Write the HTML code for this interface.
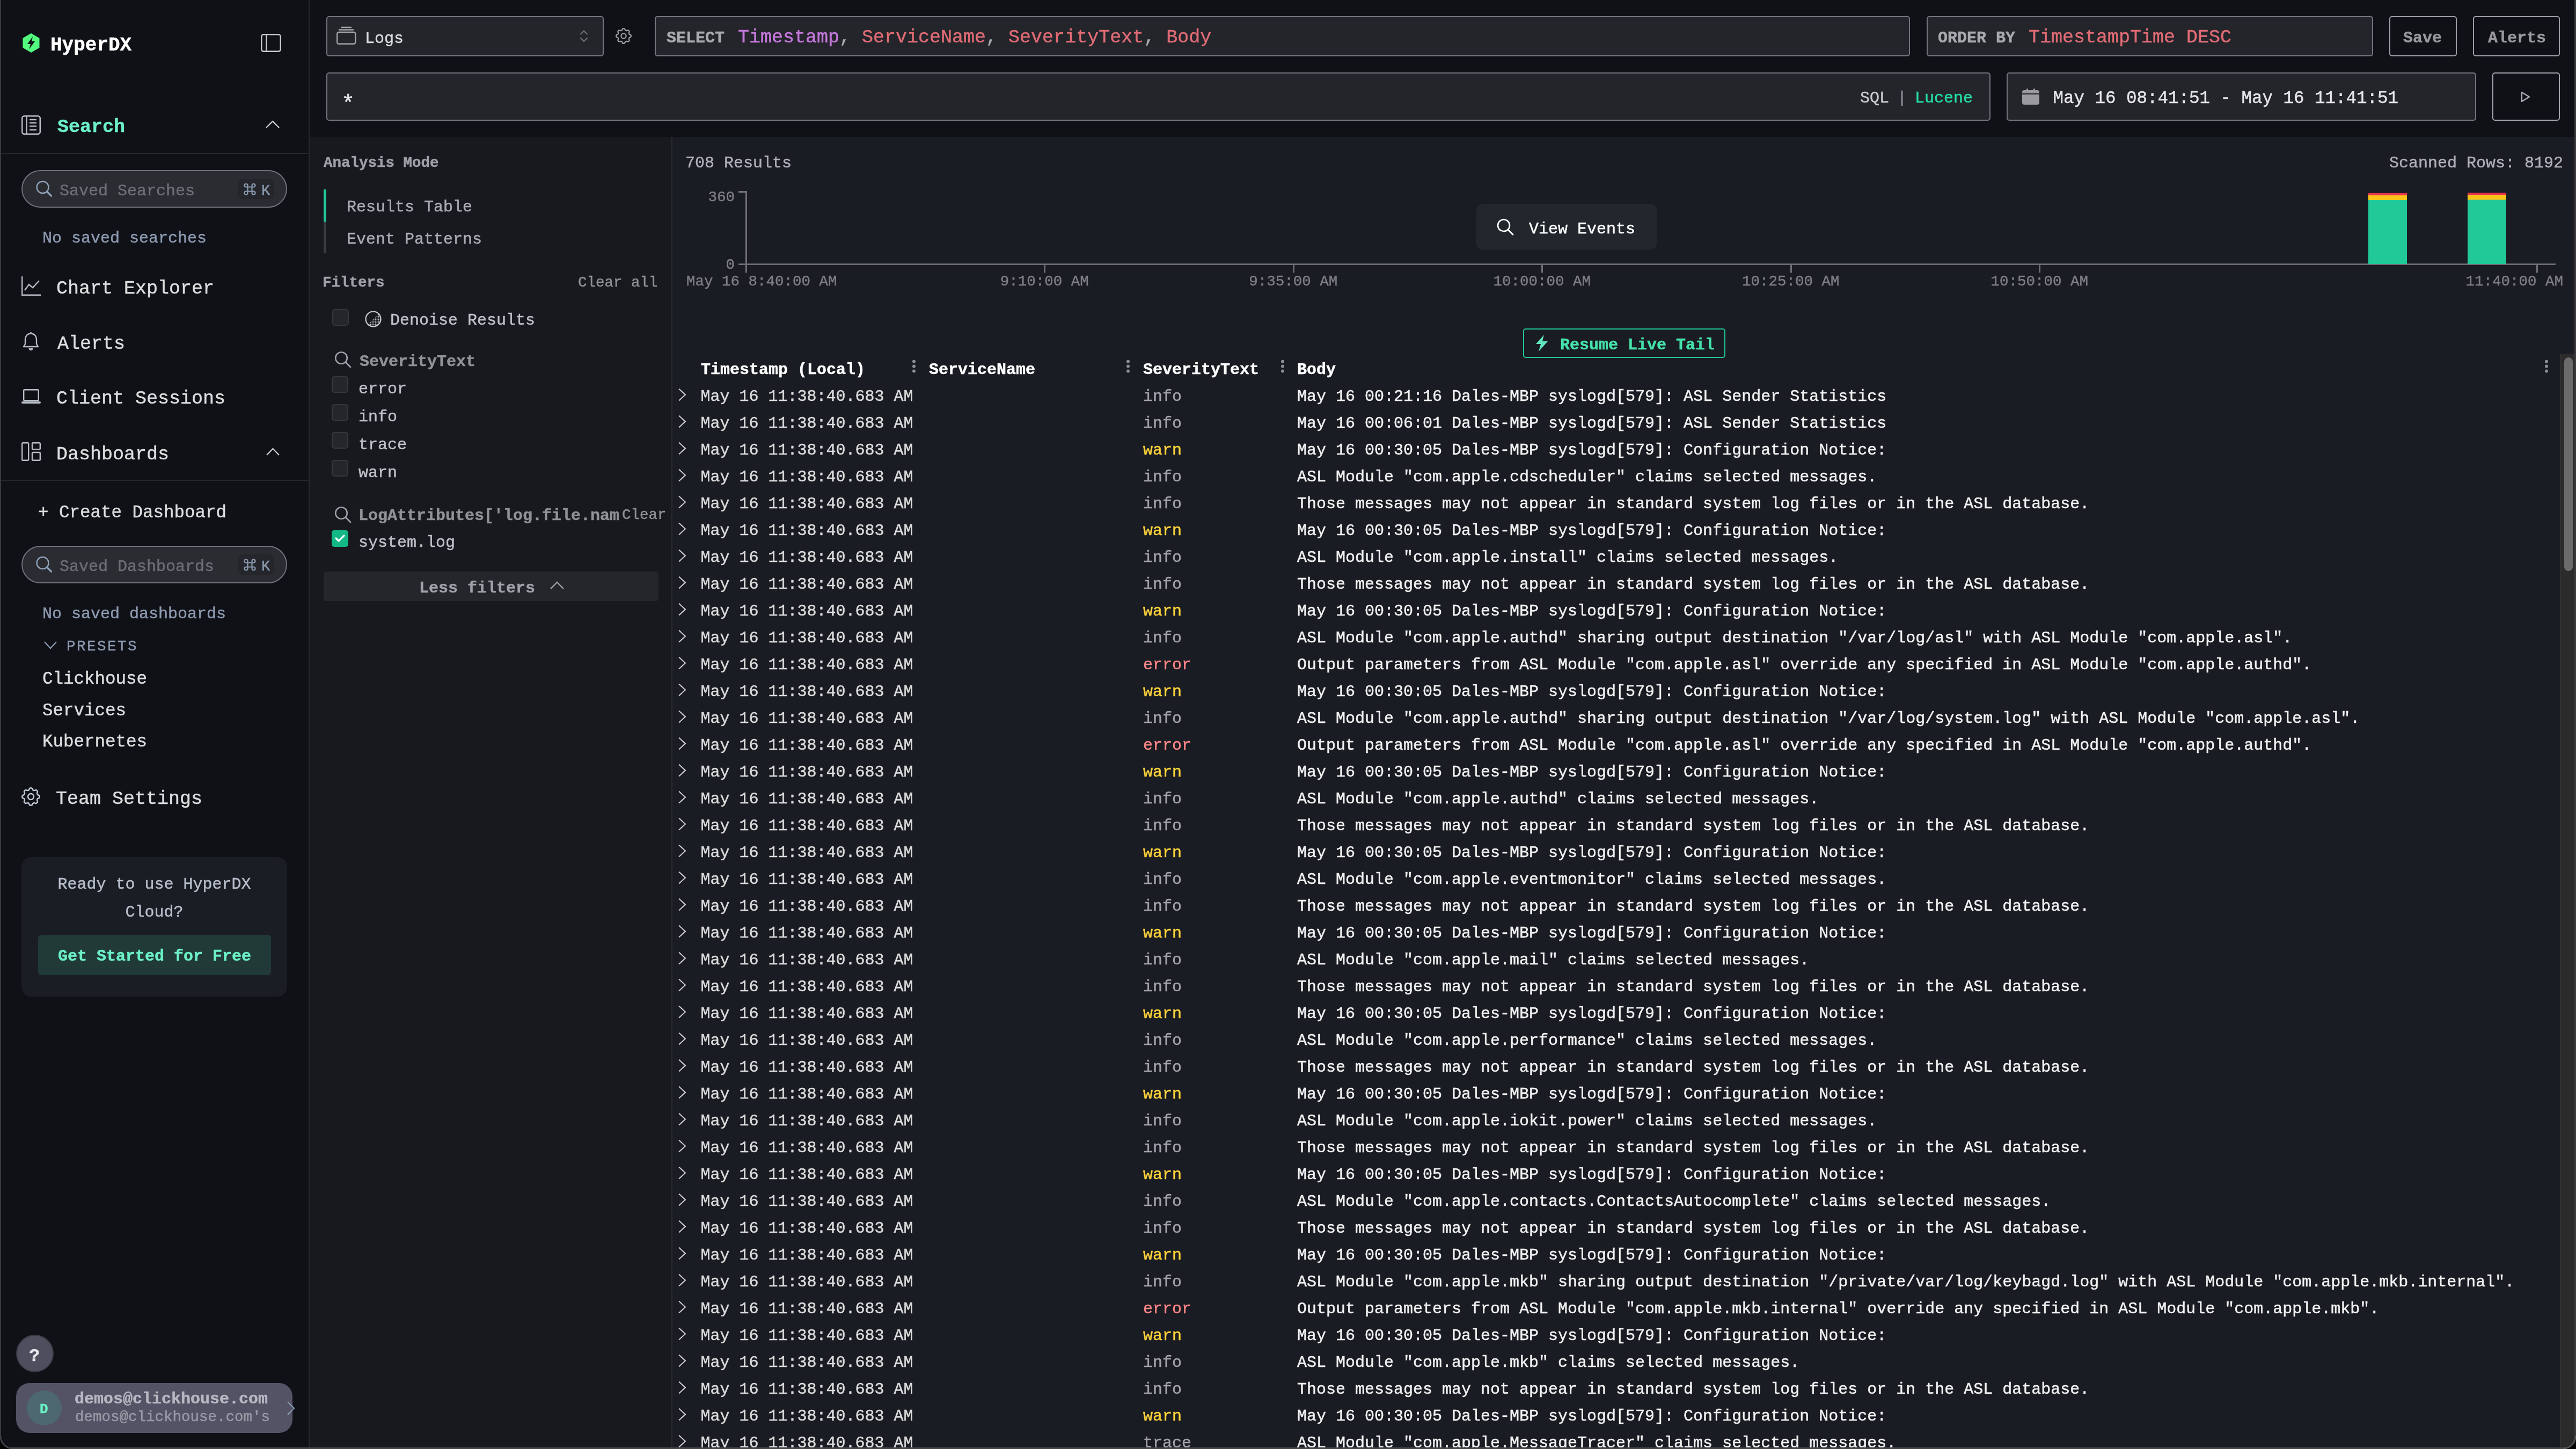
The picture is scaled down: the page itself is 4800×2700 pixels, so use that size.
<!DOCTYPE html><html><head><meta charset="utf-8"><style>
html,body{margin:0;padding:0;width:4800px;height:2700px;overflow:hidden;background:#0f1117;}
body{position:relative;font-family:"Liberation Mono",monospace;}
.t{position:absolute;white-space:pre;line-height:1.2;-webkit-text-stroke:0.45px currentColor;}
.r{position:absolute;box-sizing:border-box;}
svg.r{overflow:visible}
</style></head><body><div id="root" style="position:absolute;left:0;top:0;width:4800px;height:2700px;overflow:hidden;will-change:transform;background:#0f1117">
<div class="r" style="left:577px;top:255px;width:674px;height:2445px;background:#18191e"></div>
<div class="r" style="left:1251px;top:255px;width:2px;height:2445px;background:#2a2b30"></div>
<div class="r" style="left:1253px;top:255px;width:3544px;height:2445px;background:#1a1c23"></div>
<div class="r" style="left:575px;top:0px;width:2px;height:2700px;background:#25272c"></div>
<div class="r" style="left:0px;top:0px;width:2px;height:2700px;background:#3b3b3d"></div>
<div class="r" style="left:4797px;top:0px;width:3px;height:2700px;background:#3b3b3d"></div>
<svg class="r" style="left:42px;top:62px;" width="32" height="36" viewBox="0 0 32 36"><polygon points="16,0 31.5,9 31.5,27 16,36 0.5,27 0.5,9" fill="#52fa7e"/><path d="M19 6 L9 20 H15 L12 30 L23 15 H17 Z" fill="#0f1117"/></svg>
<div class="t " style="left:94.0px;top:62.8px;font-size:36px;color:#ffffff;font-weight:700;">HyperDX</div>
<svg class="r" style="left:486px;top:63px;" width="38" height="34" viewBox="0 0 38 34"><rect x="1.25" y="1.25" width="35.5" height="31.5" rx="4" fill="none" stroke="#c8c8cc" stroke-width="2.5"/><line x1="10.5" y1="1.5" x2="10.5" y2="32.5" stroke="#c8c8cc" stroke-width="2.5"/></svg>
<svg class="r" style="left:40px;top:215px;" width="36" height="36" viewBox="0 0 36 36"><rect x="1.25" y="1.25" width="33.5" height="33.5" rx="4" fill="none" stroke="#b8bcc4" stroke-width="2.5"/><line x1="9.5" y1="2" x2="9.5" y2="34" stroke="#b8bcc4" stroke-width="2.5"/><g stroke="#b8bcc4" stroke-width="2.5"><line x1="15" y1="8" x2="28" y2="8"/><line x1="15" y1="14" x2="28" y2="14"/><line x1="15" y1="20" x2="28" y2="20"/><line x1="15" y1="27" x2="28" y2="27"/></g></svg>
<div class="t " style="left:107.0px;top:215.7px;font-size:35px;color:#6cf0c6;font-weight:700;">Search</div>
<svg class="r" style="left:495px;top:224px;" width="26" height="16" viewBox="0 0 26 16"><polyline points="1,14 13,2 25,14" fill="none" stroke="#d8d8dc" stroke-width="2.2"/></svg>
<div class="r" style="left:2px;top:285px;width:573px;height:2px;background:#25272c"></div>
<div class="r" style="left:40px;top:317px;width:495px;height:70px;background:#2b2b32;border:2px solid #72717c;border-radius:35px"></div>
<svg class="r" style="left:67px;top:337px;" width="31" height="31" viewBox="0 0 31 31"><circle cx="12.5" cy="12" r="11" fill="none" stroke="#8ea2b8" stroke-width="2.4"/><line x1="20.5" y1="20" x2="28.5" y2="28" stroke="#8ea2b8" stroke-width="3.2" stroke-linecap="round"/></svg>
<div class="t " style="left:111.0px;top:338.0px;font-size:30px;color:#6d6f77;font-weight:400;">Saved Searches</div>
<div class="r" style="left:444px;top:333px;width:67px;height:38px;background:#25262c;border-radius:8px"></div>
<svg class="r" style="left:454px;top:341px;" width="23" height="23" viewBox="0 0 23 23"><path d="M7.5 7.5 V4.5 A3 3 0 1 0 4.5 7.5 H18.5 A3 3 0 1 0 15.5 4.5 V18.5 A3 3 0 1 0 18.5 15.5 H4.5 A3 3 0 1 0 7.5 18.5 Z" fill="none" stroke="#8c9bb0" stroke-width="2.2"/></svg>
<div class="t " style="left:487.0px;top:339.6px;font-size:27px;color:#8c9bb0;font-weight:400;">K</div>
<div class="t " style="left:79.0px;top:426.0px;font-size:30px;color:#8d9ab0;font-weight:400;">No saved searches</div>
<svg class="r" style="left:40px;top:515px;" width="36" height="36" viewBox="0 0 36 36"><polyline points="1.2,0 1.2,34.8 36,34.8" fill="none" stroke="#b8bcc4" stroke-width="2.4"/><polyline points="6,26 14,15 21,21 33,8" fill="none" stroke="#b8bcc4" stroke-width="2.4"/></svg>
<div class="t " style="left:105.0px;top:516.7px;font-size:35px;color:#dedede;font-weight:400;">Chart Explorer</div>
<svg class="r" style="left:42px;top:619px;" width="31" height="35" viewBox="0 0 31 35"><path d="M15.5 2.5 C9 2.5 5 7.5 5 14 V22 L2 27 H29 L26 22 V14 C26 7.5 22 2.5 15.5 2.5 Z" fill="none" stroke="#b8bcc4" stroke-width="2.4" stroke-linejoin="round"/><line x1="15.5" y1="0" x2="15.5" y2="3" stroke="#b8bcc4" stroke-width="2.4"/><path d="M11.5 30 A4 4 0 0 0 19.5 30 Z" fill="#b8bcc4"/></svg>
<div class="t " style="left:107.0px;top:619.7px;font-size:35px;color:#dedede;font-weight:400;">Alerts</div>
<svg class="r" style="left:40px;top:725px;" width="36" height="27" viewBox="0 0 36 27"><rect x="4.2" y="1.2" width="27.6" height="20" rx="1.5" fill="none" stroke="#b8bcc4" stroke-width="2.4"/><rect x="0" y="23" width="36" height="4" rx="2" fill="#b8bcc4"/></svg>
<div class="t " style="left:105.0px;top:721.7px;font-size:35px;color:#dedede;font-weight:400;">Client Sessions</div>
<svg class="r" style="left:40px;top:824px;" width="36" height="35" viewBox="0 0 36 35"><rect x="1.2" y="1.2" width="12" height="32.6" rx="1.5" fill="none" stroke="#b8bcc4" stroke-width="2.4"/><rect x="20" y="1.2" width="14.8" height="12" rx="1.5" fill="none" stroke="#b8bcc4" stroke-width="2.4"/><rect x="20" y="19" width="14.8" height="14.8" rx="1.5" fill="none" stroke="#b8bcc4" stroke-width="2.4"/></svg>
<div class="t " style="left:105.0px;top:825.7px;font-size:35px;color:#dedede;font-weight:400;">Dashboards</div>
<svg class="r" style="left:496px;top:834px;" width="25" height="16" viewBox="0 0 25 16"><polyline points="1,14 12.5,2 24,14" fill="none" stroke="#d8d8dc" stroke-width="2.2"/></svg>
<div class="r" style="left:2px;top:894px;width:573px;height:2px;background:#25272c"></div>
<div class="t " style="left:71.0px;top:935.9px;font-size:32.5px;color:#dedede;font-weight:400;">+ Create Dashboard</div>
<div class="r" style="left:40px;top:1017px;width:495px;height:70px;background:#2b2b32;border:2px solid #72717c;border-radius:35px"></div>
<svg class="r" style="left:67px;top:1037px;" width="31" height="31" viewBox="0 0 31 31"><circle cx="12.5" cy="12" r="11" fill="none" stroke="#8ea2b8" stroke-width="2.4"/><line x1="20.5" y1="20" x2="28.5" y2="28" stroke="#8ea2b8" stroke-width="3.2" stroke-linecap="round"/></svg>
<div class="t " style="left:111.0px;top:1038.0px;font-size:30px;color:#6d6f77;font-weight:400;">Saved Dashboards</div>
<div class="r" style="left:444px;top:1033px;width:67px;height:38px;background:#25262c;border-radius:8px"></div>
<svg class="r" style="left:454px;top:1041px;" width="23" height="23" viewBox="0 0 23 23"><path d="M7.5 7.5 V4.5 A3 3 0 1 0 4.5 7.5 H18.5 A3 3 0 1 0 15.5 4.5 V18.5 A3 3 0 1 0 18.5 15.5 H4.5 A3 3 0 1 0 7.5 18.5 Z" fill="none" stroke="#8c9bb0" stroke-width="2.2"/></svg>
<div class="t " style="left:487.0px;top:1039.6px;font-size:27px;color:#8c9bb0;font-weight:400;">K</div>
<div class="t " style="left:79.0px;top:1126.0px;font-size:30px;color:#8d9ab0;font-weight:400;">No saved dashboards</div>
<svg class="r" style="left:82px;top:1194px;" width="24" height="17" viewBox="0 0 24 17"><polyline points="1,2 12,14 23,2" fill="none" stroke="#8d9ab0" stroke-width="2.2"/></svg>
<div class="t " style="left:124.0px;top:1187.7px;font-size:27.5px;color:#8d9ab0;font-weight:400;letter-spacing:2.5px">PRESETS</div>
<div class="t " style="left:79.0px;top:1246.4px;font-size:32.5px;color:#dedede;font-weight:400;">Clickhouse</div>
<div class="t " style="left:79.0px;top:1304.9px;font-size:32.5px;color:#dedede;font-weight:400;">Services</div>
<div class="t " style="left:79.0px;top:1362.9px;font-size:32.5px;color:#dedede;font-weight:400;">Kubernetes</div>
<svg class="r" style="left:40px;top:1467px;" width="35" height="35" viewBox="2.31 2.31 19.38 19.38"><g fill="none" stroke="#c1c9d6" stroke-width="1.38"><path d="M10.325 4.317c.426 -1.756 2.924 -1.756 3.35 0a1.724 1.724 0 0 0 2.573 1.066c1.543 -.94 3.31 .826 2.37 2.37a1.724 1.724 0 0 0 1.065 2.572c1.756 .426 1.756 2.924 0 3.35a1.724 1.724 0 0 0 -1.066 2.573c.94 1.543 -.826 3.31 -2.37 2.37a1.724 1.724 0 0 0 -2.572 1.065c-.426 1.756 -2.924 1.756 -3.35 0a1.724 1.724 0 0 0 -2.573 -1.066c-1.543 .94 -3.31 -.826 -2.37 -2.37a1.724 1.724 0 0 0 -1.065 -2.572c-1.756 -.426 -1.756 -2.924 0 -3.35a1.724 1.724 0 0 0 1.066 -2.573c-.94 -1.543 .826 -3.31 2.37 -2.37c1 .608 2.296 .07 2.572 -1.065z"/><circle cx="12" cy="12" r="3"/></g></svg>
<div class="t " style="left:104.0px;top:1467.7px;font-size:35px;color:#dedede;font-weight:400;">Team Settings</div>
<div class="r" style="left:40px;top:1597px;width:495px;height:260px;background:#1b1d24;border-radius:18px"></div>
<div class="t" style="left:40px;width:495px;text-align:center;top:1622.0px;font-size:30px;color:#b8bfcc;line-height:52px">Ready to use HyperDX<br>Cloud?</div>
<div class="r" style="left:71px;top:1742px;width:434px;height:75px;background:#213a37;border-radius:6px"></div>
<div class="t" style="left:71px;width:434px;text-align:center;top:1764.0px;font-size:30px;color:#6cf0c6;font-weight:700;line-height:1.2">Get Started for Free</div>
<div class="r" style="left:30px;top:2487px;width:70px;height:70px;background:#4f4e5f;border:2px solid #3a3a45;border-radius:50%"></div>
<div class="t " style="left:54.0px;top:2506.6px;font-size:34px;color:#e6e6ea;font-weight:700;">?</div>
<div class="r" style="left:30px;top:2577px;width:515px;height:93px;background:#545366;border-radius:25px"></div>
<div class="r" style="left:50px;top:2591px;width:65px;height:65px;background:#4d6870;border-radius:50%"></div>
<div class="t " style="left:74.0px;top:2610.5px;font-size:26px;color:#6cf0c6;font-weight:700;">D</div>
<div class="t " style="left:139.0px;top:2589.0px;font-size:30px;color:#b8b8c3;font-weight:700;">demos@clickhouse.com</div>
<div class="t " style="left:140.0px;top:2624.2px;font-size:27.5px;color:#9a9aa6;font-weight:400;">demos@clickhouse.com's</div>
<svg class="r" style="left:535px;top:2611px;" width="15" height="26" viewBox="0 0 15 26"><polyline points="1,1 13,13 1,25" fill="none" stroke="#8da0b8" stroke-width="2"/></svg>
<div class="r" style="left:608px;top:30px;width:517px;height:75px;background:#24252b;border:2px solid #75747f;border-radius:5px"></div>
<svg class="r" style="left:627px;top:50px;" width="37" height="33" viewBox="0 0 37 33"><g fill="none" stroke="#a5a5aa" stroke-width="2.4"><rect x="1.2" y="10" width="34" height="21.8" rx="3"/></g><line x1="5" y1="5.5" x2="31" y2="5.5" stroke="#a5a5aa" stroke-width="2.4" stroke-linecap="round"/><line x1="9" y1="1" x2="27" y2="1" stroke="#a5a5aa" stroke-width="2.4" stroke-linecap="round"/></svg>
<div class="t " style="left:680.0px;top:54.0px;font-size:30px;color:#d9d9de;font-weight:400;">Logs</div>
<svg class="r" style="left:1081px;top:56px;" width="14" height="23" viewBox="0 0 14 23"><polyline points="1,7.5 7,1.5 13,7.5" fill="none" stroke="#6d6e75" stroke-width="2.2" stroke-linecap="round" stroke-linejoin="round"/><polyline points="1,15 7,21 13,15" fill="none" stroke="#6d6e75" stroke-width="2.2" stroke-linecap="round" stroke-linejoin="round"/></svg>
<svg class="r" style="left:1147px;top:52px;" width="30" height="30" viewBox="2.3 2.3 19.4 19.4"><g fill="none" stroke="#9c9ea3" stroke-width="1.42"><path d="M10.325 4.317c.426 -1.756 2.924 -1.756 3.35 0a1.724 1.724 0 0 0 2.573 1.066c1.543 -.94 3.31 .826 2.37 2.37a1.724 1.724 0 0 0 1.065 2.572c1.756 .426 1.756 2.924 0 3.35a1.724 1.724 0 0 0 -1.066 2.573c.94 1.543 -.826 3.31 -2.37 2.37a1.724 1.724 0 0 0 -2.572 1.065c-.426 1.756 -2.924 1.756 -3.35 0a1.724 1.724 0 0 0 -2.573 -1.066c-1.543 .94 -3.31 -.826 -2.37 -2.37a1.724 1.724 0 0 0 -1.065 -2.572c-1.756 -.426 -1.756 -2.924 0 -3.35a1.724 1.724 0 0 0 1.066 -2.573c-.94 -1.543 .826 -3.31 2.37 -2.37c1 .608 2.296 .07 2.572 -1.065z"/><circle cx="12" cy="12" r="3"/></g></svg>
<div class="r" style="left:1220px;top:30px;width:2339px;height:75px;background:#24252b;border:2px solid #75747f;border-radius:5px"></div>
<div class="t " style="left:1242.0px;top:53.0px;font-size:30px;color:#a9a9b0;font-weight:700;">SELECT</div>
<div class="t" style="left:1375px;top:48.7px;font-size:35px;line-height:1.2;color:#a9a9b0"><span style="color:#c678dd">Timestamp</span>, <span style="color:#e06c75">ServiceName</span>, <span style="color:#e06c75">SeverityText</span>, <span style="color:#e06c75">Body</span></div>
<div class="r" style="left:3590px;top:30px;width:832px;height:75px;background:#24252b;border:2px solid #75747f;border-radius:5px"></div>
<div class="t " style="left:3611.0px;top:53.0px;font-size:30px;color:#a9a9b0;font-weight:700;">ORDER BY</div>
<div class="t " style="left:3780.0px;top:48.7px;font-size:35px;color:#e06c75;font-weight:400;">TimestampTime DESC</div>
<div class="r" style="left:4452px;top:30px;width:126px;height:75px;background:#0f1117;border:2px solid #9e9ea6;border-radius:5px"></div>
<div class="t " style="left:4478.0px;top:53.0px;font-size:30px;color:#98989e;font-weight:700;">Save</div>
<div class="r" style="left:4608px;top:30px;width:162px;height:75px;background:#0f1117;border:2px solid #9e9ea6;border-radius:5px"></div>
<div class="t " style="left:4636.0px;top:53.0px;font-size:30px;color:#98989e;font-weight:700;">Alerts</div>
<div class="r" style="left:608px;top:135px;width:3101px;height:90px;background:#24252b;border:2px solid #75747f;border-radius:5px"></div>
<div class="t " style="left:636.0px;top:169.6px;font-size:42px;color:#e6e6ea;font-weight:400;">*</div>
<div class="t " style="left:3466.0px;top:165.0px;font-size:30px;color:#c9c9cf;font-weight:400;">SQL</div>
<div class="t " style="left:3535.0px;top:165.0px;font-size:30px;color:#8a8a92;font-weight:400;">|</div>
<div class="t " style="left:3568.0px;top:165.0px;font-size:30px;color:#25dea2;font-weight:400;">Lucene</div>
<div class="r" style="left:3739px;top:135px;width:875px;height:90px;background:#24252b;border:2px solid #75747f;border-radius:5px"></div>
<svg class="r" style="left:3768px;top:165px;" width="32" height="30" viewBox="0 0 32 30"><rect x="0" y="3" width="32" height="27" rx="4" fill="#9a9aa0"/><rect x="0" y="9" width="32" height="2" fill="#24252b"/><rect x="8" y="0" width="3" height="6" rx="1" fill="#9a9aa0"/><rect x="21" y="0" width="3" height="6" rx="1" fill="#9a9aa0"/></svg>
<div class="t " style="left:3825.5px;top:163.9px;font-size:32.5px;color:#e6e6ea;font-weight:400;">May 16 08:41:51 - May 16 11:41:51</div>
<div class="r" style="left:4644px;top:135px;width:126px;height:90px;background:#0f1117;border:2px solid #a6a5b1;border-radius:5px"></div>
<svg class="r" style="left:4697px;top:170px;" width="18" height="21" viewBox="0 0 18 21"><polygon points="2,2 16,10.5 2,19" fill="none" stroke="#b0b0b8" stroke-width="2.2" stroke-linejoin="round"/></svg>
<div class="t " style="left:603.0px;top:287.2px;font-size:27.5px;color:#a0a0a8;font-weight:700;">Analysis Mode</div>
<div class="r" style="left:603px;top:353px;width:5px;height:60px;background:#20c997"></div>
<div class="r" style="left:603px;top:413px;width:5px;height:59px;background:#3a3b40"></div>
<div class="t " style="left:646.0px;top:368.0px;font-size:30px;color:#abaab5;font-weight:400;">Results Table</div>
<div class="t " style="left:646.0px;top:428.0px;font-size:30px;color:#abaab5;font-weight:400;">Event Patterns</div>
<div class="t " style="left:601.0px;top:510.2px;font-size:27.5px;color:#a0a0a8;font-weight:700;">Filters</div>
<div class="t " style="left:1077.0px;top:510.2px;font-size:27.5px;color:#909096;font-weight:400;">Clear all</div>
<div class="r" style="left:619px;top:576px;width:31px;height:31px;background:#25262b;border:2px solid #36373d;border-radius:5px"></div>
<svg class="r" style="left:680px;top:579px;" width="31" height="31" viewBox="0 0 31 31"><defs><pattern id="dots" width="3" height="3" patternUnits="userSpaceOnUse"><circle cx="1.5" cy="1.5" r="0.9" fill="#c9c9cf"/></pattern></defs><circle cx="15.5" cy="15.5" r="14" fill="none" stroke="#c9c9cf" stroke-width="2.2"/><path d="M25.5 5.5 A14 14 0 0 1 5.5 25.5 Z" fill="url(#dots)"/></svg>
<div class="t " style="left:727.0px;top:579.0px;font-size:30px;color:#c1c1ca;font-weight:400;">Denoise Results</div>
<svg class="r" style="left:623px;top:654px;" width="32" height="33" viewBox="0 0 32 33"><circle cx="13" cy="13" r="10.8" fill="none" stroke="#a0a0a8" stroke-width="2.6"/><line x1="21" y1="21" x2="30" y2="30" stroke="#a0a0a8" stroke-width="2.8" stroke-linecap="round"/></svg>
<div class="t " style="left:670.0px;top:656.0px;font-size:30px;color:#909296;font-weight:700;">SeverityText</div>
<div class="r" style="left:618px;top:700.7px;width:31px;height:31.0px;background:#25262b;border:2px solid #36373d;border-radius:5px"></div>
<div class="t " style="left:668.0px;top:707.0px;font-size:30px;color:#c1c1ca;font-weight:400;">error</div>
<div class="r" style="left:618px;top:752.7px;width:31px;height:31.0px;background:#25262b;border:2px solid #36373d;border-radius:5px"></div>
<div class="t " style="left:668.0px;top:759.0px;font-size:30px;color:#c1c1ca;font-weight:400;">info</div>
<div class="r" style="left:618px;top:804.7px;width:31px;height:31.0px;background:#25262b;border:2px solid #36373d;border-radius:5px"></div>
<div class="t " style="left:668.0px;top:811.0px;font-size:30px;color:#c1c1ca;font-weight:400;">trace</div>
<div class="r" style="left:618px;top:856.7px;width:31px;height:31.0px;background:#25262b;border:2px solid #36373d;border-radius:5px"></div>
<div class="t " style="left:668.0px;top:863.0px;font-size:30px;color:#c1c1ca;font-weight:400;">warn</div>
<svg class="r" style="left:623px;top:943px;" width="32" height="33" viewBox="0 0 32 33"><circle cx="13" cy="13" r="10.8" fill="none" stroke="#a0a0a8" stroke-width="2.6"/><line x1="21" y1="21" x2="30" y2="30" stroke="#a0a0a8" stroke-width="2.8" stroke-linecap="round"/></svg>
<div class="t " style="left:668.0px;top:943.0px;font-size:30px;color:#909296;font-weight:700;">LogAttributes['log.file.nam</div>
<div class="t " style="left:1159.0px;top:943.2px;font-size:27.5px;color:#909096;font-weight:400;">Clear</div>
<div class="r" style="left:618px;top:988px;width:31px;height:31px;background:#12b886;border-radius:5px"></div>
<svg class="r" style="left:624px;top:996px;" width="19" height="15" viewBox="0 0 19 15"><polyline points="2,7 7,12 17,2" fill="none" stroke="#ffffff" stroke-width="3.2" stroke-linecap="round" stroke-linejoin="round"/></svg>
<div class="t " style="left:668.0px;top:993.0px;font-size:30px;color:#c1c1ca;font-weight:400;">system.log</div>
<div class="r" style="left:603px;top:1065px;width:624px;height:55px;background:#25262b;border-radius:5px"></div>
<div class="t " style="left:781.0px;top:1078.0px;font-size:30px;color:#a0a0a8;font-weight:700;">Less filters</div>
<svg class="r" style="left:1025px;top:1083px;" width="26" height="16" viewBox="0 0 26 16"><polyline points="1,14 13,2 25,14" fill="none" stroke="#a0a0a8" stroke-width="2.4"/></svg>
<div class="t " style="left:1277.0px;top:286.0px;font-size:30px;color:#b0afba;font-weight:400;">708 Results</div>
<div class="t" style="right:24px;top:286.0px;font-size:30px;color:#b0afba">Scanned Rows: 8192</div>
<div class="r" style="left:1389px;top:356px;width:2.5px;height:138px;background:#707074"></div>
<div class="r" style="left:1376px;top:356px;width:15px;height:2.5px;background:#707074"></div>
<div class="r" style="left:1376px;top:491px;width:3386px;height:2.5px;background:#707074"></div>
<div class="t" style="right:3431px;top:351.2px;font-size:27.5px;color:#7e7e84">360</div>
<div class="t" style="right:3431px;top:477.2px;font-size:27.5px;color:#7e7e84">0</div>
<div class="r" style="left:1389px;top:493px;width:2.5px;height:15px;background:#707074"></div>
<div class="t " style="left:1279.0px;top:508.2px;font-size:27.5px;color:#7e7e84;font-weight:400;">May 16 8:40:00 AM</div>
<div class="r" style="left:1945px;top:493px;width:2.5px;height:15px;background:#707074"></div>
<div class="t " style="left:1863.7px;top:508.2px;font-size:27.5px;color:#7e7e84;font-weight:400;">9:10:00 AM</div>
<div class="r" style="left:2409px;top:493px;width:2.5px;height:15px;background:#707074"></div>
<div class="t " style="left:2327.2px;top:508.2px;font-size:27.5px;color:#7e7e84;font-weight:400;">9:35:00 AM</div>
<div class="r" style="left:2872px;top:493px;width:2.5px;height:15px;background:#707074"></div>
<div class="t " style="left:2782.4px;top:508.2px;font-size:27.5px;color:#7e7e84;font-weight:400;">10:00:00 AM</div>
<div class="r" style="left:3336px;top:493px;width:2.5px;height:15px;background:#707074"></div>
<div class="t " style="left:3245.9px;top:508.2px;font-size:27.5px;color:#7e7e84;font-weight:400;">10:25:00 AM</div>
<div class="r" style="left:3799px;top:493px;width:2.5px;height:15px;background:#707074"></div>
<div class="t " style="left:3709.4px;top:508.2px;font-size:27.5px;color:#7e7e84;font-weight:400;">10:50:00 AM</div>
<div class="r" style="left:4726px;top:493px;width:2.5px;height:15px;background:#707074"></div>
<div class="t " style="left:4594.5px;top:508.2px;font-size:27.5px;color:#7e7e84;font-weight:400;">11:40:00 AM</div>
<div class="r" style="left:4413px;top:360px;width:72px;height:4px;background:#e8334f"></div>
<div class="r" style="left:4413px;top:364px;width:72px;height:9px;background:#fcc419"></div>
<div class="r" style="left:4413px;top:373px;width:72px;height:119px;background:#20c997"></div>
<div class="r" style="left:4598px;top:359px;width:72px;height:4px;background:#e8334f"></div>
<div class="r" style="left:4598px;top:363px;width:72px;height:9px;background:#fcc419"></div>
<div class="r" style="left:4598px;top:372px;width:72px;height:120px;background:#20c997"></div>
<div class="r" style="left:2751px;top:380px;width:336px;height:85px;background:#22272e;border-radius:12px"></div>
<svg class="r" style="left:2789px;top:407px;" width="33" height="33" viewBox="0 0 33 33"><circle cx="13" cy="13" r="11" fill="none" stroke="#ffffff" stroke-width="2.6"/><line x1="21" y1="21" x2="30" y2="30" stroke="#ffffff" stroke-width="3" stroke-linecap="round"/></svg>
<div class="t " style="left:2849.0px;top:409.0px;font-size:30px;color:#ffffff;font-weight:400;">View Events</div>
<div class="r" style="left:2838px;top:612px;width:377px;height:55px;border:2.5px solid #20c997;border-radius:5px"></div>
<svg class="r" style="left:2860px;top:624px;" width="26" height="31" viewBox="0 0 26 31"><path d="M17 0 L2 17 H11 L7 31 L24 12 H14 Z" fill="#63e6be"/></svg>
<div class="t " style="left:2907.0px;top:625.0px;font-size:30px;color:#45e3ab;font-weight:700;">Resume Live Tail</div>
<div class="t " style="left:1306.0px;top:671.3px;font-size:30px;color:#ffffff;font-weight:700;">Timestamp (Local)</div>
<div class="t " style="left:1731.0px;top:671.3px;font-size:30px;color:#ffffff;font-weight:700;">ServiceName</div>
<div class="t " style="left:2130.0px;top:671.3px;font-size:30px;color:#ffffff;font-weight:700;">SeverityText</div>
<div class="t " style="left:2417.0px;top:671.3px;font-size:30px;color:#ffffff;font-weight:700;">Body</div>
<svg class="r" style="left:1699px;top:670px;" width="8" height="26" viewBox="0 0 8 26"><circle cx="4" cy="3.5" r="3" fill="#8a8f98"/><circle cx="4" cy="12.5" r="3" fill="#8a8f98"/><circle cx="4" cy="21.5" r="3" fill="#8a8f98"/></svg>
<svg class="r" style="left:2098px;top:670px;" width="8" height="26" viewBox="0 0 8 26"><circle cx="4" cy="3.5" r="3" fill="#8a8f98"/><circle cx="4" cy="12.5" r="3" fill="#8a8f98"/><circle cx="4" cy="21.5" r="3" fill="#8a8f98"/></svg>
<svg class="r" style="left:2386px;top:670px;" width="8" height="26" viewBox="0 0 8 26"><circle cx="4" cy="3.5" r="3" fill="#8a8f98"/><circle cx="4" cy="12.5" r="3" fill="#8a8f98"/><circle cx="4" cy="21.5" r="3" fill="#8a8f98"/></svg>
<svg class="r" style="left:4741px;top:670px;" width="8" height="26" viewBox="0 0 8 26"><circle cx="4" cy="3.5" r="3" fill="#8a8f98"/><circle cx="4" cy="12.5" r="3" fill="#8a8f98"/><circle cx="4" cy="21.5" r="3" fill="#8a8f98"/></svg>
<div class="r" style="left:1253px;top:714.3px;width:3517px;height:1985.7px;overflow:hidden">
<div class="r" style="left:0;top:0px;width:3517px;height:50px;font-size:30px;line-height:50px"><svg class="r" style="left:10px;top:9px" width="16" height="26" viewBox="0 0 16 26"><polyline points="2,1.5 14,12.5 2,23.5" fill="none" stroke="#d0d0d4" stroke-width="2"/></svg><span class="t" style="left:52.5px;top:0;line-height:50px;color:#dcdcdc">May 16 11:38:40.683 AM</span><span class="t" style="left:877px;top:0;line-height:50px;color:#a3a3ad">info</span><span class="t" style="left:1164px;top:0;line-height:50px;color:#f2f2f2">May 16 00:21:16 Dales-MBP syslogd[579]: ASL Sender Statistics</span></div>
<div class="r" style="left:0;top:50px;width:3517px;height:50px;font-size:30px;line-height:50px"><svg class="r" style="left:10px;top:9px" width="16" height="26" viewBox="0 0 16 26"><polyline points="2,1.5 14,12.5 2,23.5" fill="none" stroke="#d0d0d4" stroke-width="2"/></svg><span class="t" style="left:52.5px;top:0;line-height:50px;color:#dcdcdc">May 16 11:38:40.683 AM</span><span class="t" style="left:877px;top:0;line-height:50px;color:#a3a3ad">info</span><span class="t" style="left:1164px;top:0;line-height:50px;color:#f2f2f2">May 16 00:06:01 Dales-MBP syslogd[579]: ASL Sender Statistics</span></div>
<div class="r" style="left:0;top:100px;width:3517px;height:50px;font-size:30px;line-height:50px"><svg class="r" style="left:10px;top:9px" width="16" height="26" viewBox="0 0 16 26"><polyline points="2,1.5 14,12.5 2,23.5" fill="none" stroke="#d0d0d4" stroke-width="2"/></svg><span class="t" style="left:52.5px;top:0;line-height:50px;color:#dcdcdc">May 16 11:38:40.683 AM</span><span class="t" style="left:877px;top:0;line-height:50px;color:#ffd43b">warn</span><span class="t" style="left:1164px;top:0;line-height:50px;color:#f2f2f2">May 16 00:30:05 Dales-MBP syslogd[579]: Configuration Notice:</span></div>
<div class="r" style="left:0;top:150px;width:3517px;height:50px;font-size:30px;line-height:50px"><svg class="r" style="left:10px;top:9px" width="16" height="26" viewBox="0 0 16 26"><polyline points="2,1.5 14,12.5 2,23.5" fill="none" stroke="#d0d0d4" stroke-width="2"/></svg><span class="t" style="left:52.5px;top:0;line-height:50px;color:#dcdcdc">May 16 11:38:40.683 AM</span><span class="t" style="left:877px;top:0;line-height:50px;color:#a3a3ad">info</span><span class="t" style="left:1164px;top:0;line-height:50px;color:#f2f2f2">ASL Module &quot;com.apple.cdscheduler&quot; claims selected messages.</span></div>
<div class="r" style="left:0;top:200px;width:3517px;height:50px;font-size:30px;line-height:50px"><svg class="r" style="left:10px;top:9px" width="16" height="26" viewBox="0 0 16 26"><polyline points="2,1.5 14,12.5 2,23.5" fill="none" stroke="#d0d0d4" stroke-width="2"/></svg><span class="t" style="left:52.5px;top:0;line-height:50px;color:#dcdcdc">May 16 11:38:40.683 AM</span><span class="t" style="left:877px;top:0;line-height:50px;color:#a3a3ad">info</span><span class="t" style="left:1164px;top:0;line-height:50px;color:#f2f2f2">Those messages may not appear in standard system log files or in the ASL database.</span></div>
<div class="r" style="left:0;top:250px;width:3517px;height:50px;font-size:30px;line-height:50px"><svg class="r" style="left:10px;top:9px" width="16" height="26" viewBox="0 0 16 26"><polyline points="2,1.5 14,12.5 2,23.5" fill="none" stroke="#d0d0d4" stroke-width="2"/></svg><span class="t" style="left:52.5px;top:0;line-height:50px;color:#dcdcdc">May 16 11:38:40.683 AM</span><span class="t" style="left:877px;top:0;line-height:50px;color:#ffd43b">warn</span><span class="t" style="left:1164px;top:0;line-height:50px;color:#f2f2f2">May 16 00:30:05 Dales-MBP syslogd[579]: Configuration Notice:</span></div>
<div class="r" style="left:0;top:300px;width:3517px;height:50px;font-size:30px;line-height:50px"><svg class="r" style="left:10px;top:9px" width="16" height="26" viewBox="0 0 16 26"><polyline points="2,1.5 14,12.5 2,23.5" fill="none" stroke="#d0d0d4" stroke-width="2"/></svg><span class="t" style="left:52.5px;top:0;line-height:50px;color:#dcdcdc">May 16 11:38:40.683 AM</span><span class="t" style="left:877px;top:0;line-height:50px;color:#a3a3ad">info</span><span class="t" style="left:1164px;top:0;line-height:50px;color:#f2f2f2">ASL Module &quot;com.apple.install&quot; claims selected messages.</span></div>
<div class="r" style="left:0;top:350px;width:3517px;height:50px;font-size:30px;line-height:50px"><svg class="r" style="left:10px;top:9px" width="16" height="26" viewBox="0 0 16 26"><polyline points="2,1.5 14,12.5 2,23.5" fill="none" stroke="#d0d0d4" stroke-width="2"/></svg><span class="t" style="left:52.5px;top:0;line-height:50px;color:#dcdcdc">May 16 11:38:40.683 AM</span><span class="t" style="left:877px;top:0;line-height:50px;color:#a3a3ad">info</span><span class="t" style="left:1164px;top:0;line-height:50px;color:#f2f2f2">Those messages may not appear in standard system log files or in the ASL database.</span></div>
<div class="r" style="left:0;top:400px;width:3517px;height:50px;font-size:30px;line-height:50px"><svg class="r" style="left:10px;top:9px" width="16" height="26" viewBox="0 0 16 26"><polyline points="2,1.5 14,12.5 2,23.5" fill="none" stroke="#d0d0d4" stroke-width="2"/></svg><span class="t" style="left:52.5px;top:0;line-height:50px;color:#dcdcdc">May 16 11:38:40.683 AM</span><span class="t" style="left:877px;top:0;line-height:50px;color:#ffd43b">warn</span><span class="t" style="left:1164px;top:0;line-height:50px;color:#f2f2f2">May 16 00:30:05 Dales-MBP syslogd[579]: Configuration Notice:</span></div>
<div class="r" style="left:0;top:450px;width:3517px;height:50px;font-size:30px;line-height:50px"><svg class="r" style="left:10px;top:9px" width="16" height="26" viewBox="0 0 16 26"><polyline points="2,1.5 14,12.5 2,23.5" fill="none" stroke="#d0d0d4" stroke-width="2"/></svg><span class="t" style="left:52.5px;top:0;line-height:50px;color:#dcdcdc">May 16 11:38:40.683 AM</span><span class="t" style="left:877px;top:0;line-height:50px;color:#a3a3ad">info</span><span class="t" style="left:1164px;top:0;line-height:50px;color:#f2f2f2">ASL Module &quot;com.apple.authd&quot; sharing output destination &quot;/var/log/asl&quot; with ASL Module &quot;com.apple.asl&quot;.</span></div>
<div class="r" style="left:0;top:500px;width:3517px;height:50px;font-size:30px;line-height:50px"><svg class="r" style="left:10px;top:9px" width="16" height="26" viewBox="0 0 16 26"><polyline points="2,1.5 14,12.5 2,23.5" fill="none" stroke="#d0d0d4" stroke-width="2"/></svg><span class="t" style="left:52.5px;top:0;line-height:50px;color:#dcdcdc">May 16 11:38:40.683 AM</span><span class="t" style="left:877px;top:0;line-height:50px;color:#ff8787">error</span><span class="t" style="left:1164px;top:0;line-height:50px;color:#f2f2f2">Output parameters from ASL Module &quot;com.apple.asl&quot; override any specified in ASL Module &quot;com.apple.authd&quot;.</span></div>
<div class="r" style="left:0;top:550px;width:3517px;height:50px;font-size:30px;line-height:50px"><svg class="r" style="left:10px;top:9px" width="16" height="26" viewBox="0 0 16 26"><polyline points="2,1.5 14,12.5 2,23.5" fill="none" stroke="#d0d0d4" stroke-width="2"/></svg><span class="t" style="left:52.5px;top:0;line-height:50px;color:#dcdcdc">May 16 11:38:40.683 AM</span><span class="t" style="left:877px;top:0;line-height:50px;color:#ffd43b">warn</span><span class="t" style="left:1164px;top:0;line-height:50px;color:#f2f2f2">May 16 00:30:05 Dales-MBP syslogd[579]: Configuration Notice:</span></div>
<div class="r" style="left:0;top:600px;width:3517px;height:50px;font-size:30px;line-height:50px"><svg class="r" style="left:10px;top:9px" width="16" height="26" viewBox="0 0 16 26"><polyline points="2,1.5 14,12.5 2,23.5" fill="none" stroke="#d0d0d4" stroke-width="2"/></svg><span class="t" style="left:52.5px;top:0;line-height:50px;color:#dcdcdc">May 16 11:38:40.683 AM</span><span class="t" style="left:877px;top:0;line-height:50px;color:#a3a3ad">info</span><span class="t" style="left:1164px;top:0;line-height:50px;color:#f2f2f2">ASL Module &quot;com.apple.authd&quot; sharing output destination &quot;/var/log/system.log&quot; with ASL Module &quot;com.apple.asl&quot;.</span></div>
<div class="r" style="left:0;top:650px;width:3517px;height:50px;font-size:30px;line-height:50px"><svg class="r" style="left:10px;top:9px" width="16" height="26" viewBox="0 0 16 26"><polyline points="2,1.5 14,12.5 2,23.5" fill="none" stroke="#d0d0d4" stroke-width="2"/></svg><span class="t" style="left:52.5px;top:0;line-height:50px;color:#dcdcdc">May 16 11:38:40.683 AM</span><span class="t" style="left:877px;top:0;line-height:50px;color:#ff8787">error</span><span class="t" style="left:1164px;top:0;line-height:50px;color:#f2f2f2">Output parameters from ASL Module &quot;com.apple.asl&quot; override any specified in ASL Module &quot;com.apple.authd&quot;.</span></div>
<div class="r" style="left:0;top:700px;width:3517px;height:50px;font-size:30px;line-height:50px"><svg class="r" style="left:10px;top:9px" width="16" height="26" viewBox="0 0 16 26"><polyline points="2,1.5 14,12.5 2,23.5" fill="none" stroke="#d0d0d4" stroke-width="2"/></svg><span class="t" style="left:52.5px;top:0;line-height:50px;color:#dcdcdc">May 16 11:38:40.683 AM</span><span class="t" style="left:877px;top:0;line-height:50px;color:#ffd43b">warn</span><span class="t" style="left:1164px;top:0;line-height:50px;color:#f2f2f2">May 16 00:30:05 Dales-MBP syslogd[579]: Configuration Notice:</span></div>
<div class="r" style="left:0;top:750px;width:3517px;height:50px;font-size:30px;line-height:50px"><svg class="r" style="left:10px;top:9px" width="16" height="26" viewBox="0 0 16 26"><polyline points="2,1.5 14,12.5 2,23.5" fill="none" stroke="#d0d0d4" stroke-width="2"/></svg><span class="t" style="left:52.5px;top:0;line-height:50px;color:#dcdcdc">May 16 11:38:40.683 AM</span><span class="t" style="left:877px;top:0;line-height:50px;color:#a3a3ad">info</span><span class="t" style="left:1164px;top:0;line-height:50px;color:#f2f2f2">ASL Module &quot;com.apple.authd&quot; claims selected messages.</span></div>
<div class="r" style="left:0;top:800px;width:3517px;height:50px;font-size:30px;line-height:50px"><svg class="r" style="left:10px;top:9px" width="16" height="26" viewBox="0 0 16 26"><polyline points="2,1.5 14,12.5 2,23.5" fill="none" stroke="#d0d0d4" stroke-width="2"/></svg><span class="t" style="left:52.5px;top:0;line-height:50px;color:#dcdcdc">May 16 11:38:40.683 AM</span><span class="t" style="left:877px;top:0;line-height:50px;color:#a3a3ad">info</span><span class="t" style="left:1164px;top:0;line-height:50px;color:#f2f2f2">Those messages may not appear in standard system log files or in the ASL database.</span></div>
<div class="r" style="left:0;top:850px;width:3517px;height:50px;font-size:30px;line-height:50px"><svg class="r" style="left:10px;top:9px" width="16" height="26" viewBox="0 0 16 26"><polyline points="2,1.5 14,12.5 2,23.5" fill="none" stroke="#d0d0d4" stroke-width="2"/></svg><span class="t" style="left:52.5px;top:0;line-height:50px;color:#dcdcdc">May 16 11:38:40.683 AM</span><span class="t" style="left:877px;top:0;line-height:50px;color:#ffd43b">warn</span><span class="t" style="left:1164px;top:0;line-height:50px;color:#f2f2f2">May 16 00:30:05 Dales-MBP syslogd[579]: Configuration Notice:</span></div>
<div class="r" style="left:0;top:900px;width:3517px;height:50px;font-size:30px;line-height:50px"><svg class="r" style="left:10px;top:9px" width="16" height="26" viewBox="0 0 16 26"><polyline points="2,1.5 14,12.5 2,23.5" fill="none" stroke="#d0d0d4" stroke-width="2"/></svg><span class="t" style="left:52.5px;top:0;line-height:50px;color:#dcdcdc">May 16 11:38:40.683 AM</span><span class="t" style="left:877px;top:0;line-height:50px;color:#a3a3ad">info</span><span class="t" style="left:1164px;top:0;line-height:50px;color:#f2f2f2">ASL Module &quot;com.apple.eventmonitor&quot; claims selected messages.</span></div>
<div class="r" style="left:0;top:950px;width:3517px;height:50px;font-size:30px;line-height:50px"><svg class="r" style="left:10px;top:9px" width="16" height="26" viewBox="0 0 16 26"><polyline points="2,1.5 14,12.5 2,23.5" fill="none" stroke="#d0d0d4" stroke-width="2"/></svg><span class="t" style="left:52.5px;top:0;line-height:50px;color:#dcdcdc">May 16 11:38:40.683 AM</span><span class="t" style="left:877px;top:0;line-height:50px;color:#a3a3ad">info</span><span class="t" style="left:1164px;top:0;line-height:50px;color:#f2f2f2">Those messages may not appear in standard system log files or in the ASL database.</span></div>
<div class="r" style="left:0;top:1000px;width:3517px;height:50px;font-size:30px;line-height:50px"><svg class="r" style="left:10px;top:9px" width="16" height="26" viewBox="0 0 16 26"><polyline points="2,1.5 14,12.5 2,23.5" fill="none" stroke="#d0d0d4" stroke-width="2"/></svg><span class="t" style="left:52.5px;top:0;line-height:50px;color:#dcdcdc">May 16 11:38:40.683 AM</span><span class="t" style="left:877px;top:0;line-height:50px;color:#ffd43b">warn</span><span class="t" style="left:1164px;top:0;line-height:50px;color:#f2f2f2">May 16 00:30:05 Dales-MBP syslogd[579]: Configuration Notice:</span></div>
<div class="r" style="left:0;top:1050px;width:3517px;height:50px;font-size:30px;line-height:50px"><svg class="r" style="left:10px;top:9px" width="16" height="26" viewBox="0 0 16 26"><polyline points="2,1.5 14,12.5 2,23.5" fill="none" stroke="#d0d0d4" stroke-width="2"/></svg><span class="t" style="left:52.5px;top:0;line-height:50px;color:#dcdcdc">May 16 11:38:40.683 AM</span><span class="t" style="left:877px;top:0;line-height:50px;color:#a3a3ad">info</span><span class="t" style="left:1164px;top:0;line-height:50px;color:#f2f2f2">ASL Module &quot;com.apple.mail&quot; claims selected messages.</span></div>
<div class="r" style="left:0;top:1100px;width:3517px;height:50px;font-size:30px;line-height:50px"><svg class="r" style="left:10px;top:9px" width="16" height="26" viewBox="0 0 16 26"><polyline points="2,1.5 14,12.5 2,23.5" fill="none" stroke="#d0d0d4" stroke-width="2"/></svg><span class="t" style="left:52.5px;top:0;line-height:50px;color:#dcdcdc">May 16 11:38:40.683 AM</span><span class="t" style="left:877px;top:0;line-height:50px;color:#a3a3ad">info</span><span class="t" style="left:1164px;top:0;line-height:50px;color:#f2f2f2">Those messages may not appear in standard system log files or in the ASL database.</span></div>
<div class="r" style="left:0;top:1150px;width:3517px;height:50px;font-size:30px;line-height:50px"><svg class="r" style="left:10px;top:9px" width="16" height="26" viewBox="0 0 16 26"><polyline points="2,1.5 14,12.5 2,23.5" fill="none" stroke="#d0d0d4" stroke-width="2"/></svg><span class="t" style="left:52.5px;top:0;line-height:50px;color:#dcdcdc">May 16 11:38:40.683 AM</span><span class="t" style="left:877px;top:0;line-height:50px;color:#ffd43b">warn</span><span class="t" style="left:1164px;top:0;line-height:50px;color:#f2f2f2">May 16 00:30:05 Dales-MBP syslogd[579]: Configuration Notice:</span></div>
<div class="r" style="left:0;top:1200px;width:3517px;height:50px;font-size:30px;line-height:50px"><svg class="r" style="left:10px;top:9px" width="16" height="26" viewBox="0 0 16 26"><polyline points="2,1.5 14,12.5 2,23.5" fill="none" stroke="#d0d0d4" stroke-width="2"/></svg><span class="t" style="left:52.5px;top:0;line-height:50px;color:#dcdcdc">May 16 11:38:40.683 AM</span><span class="t" style="left:877px;top:0;line-height:50px;color:#a3a3ad">info</span><span class="t" style="left:1164px;top:0;line-height:50px;color:#f2f2f2">ASL Module &quot;com.apple.performance&quot; claims selected messages.</span></div>
<div class="r" style="left:0;top:1250px;width:3517px;height:50px;font-size:30px;line-height:50px"><svg class="r" style="left:10px;top:9px" width="16" height="26" viewBox="0 0 16 26"><polyline points="2,1.5 14,12.5 2,23.5" fill="none" stroke="#d0d0d4" stroke-width="2"/></svg><span class="t" style="left:52.5px;top:0;line-height:50px;color:#dcdcdc">May 16 11:38:40.683 AM</span><span class="t" style="left:877px;top:0;line-height:50px;color:#a3a3ad">info</span><span class="t" style="left:1164px;top:0;line-height:50px;color:#f2f2f2">Those messages may not appear in standard system log files or in the ASL database.</span></div>
<div class="r" style="left:0;top:1300px;width:3517px;height:50px;font-size:30px;line-height:50px"><svg class="r" style="left:10px;top:9px" width="16" height="26" viewBox="0 0 16 26"><polyline points="2,1.5 14,12.5 2,23.5" fill="none" stroke="#d0d0d4" stroke-width="2"/></svg><span class="t" style="left:52.5px;top:0;line-height:50px;color:#dcdcdc">May 16 11:38:40.683 AM</span><span class="t" style="left:877px;top:0;line-height:50px;color:#ffd43b">warn</span><span class="t" style="left:1164px;top:0;line-height:50px;color:#f2f2f2">May 16 00:30:05 Dales-MBP syslogd[579]: Configuration Notice:</span></div>
<div class="r" style="left:0;top:1350px;width:3517px;height:50px;font-size:30px;line-height:50px"><svg class="r" style="left:10px;top:9px" width="16" height="26" viewBox="0 0 16 26"><polyline points="2,1.5 14,12.5 2,23.5" fill="none" stroke="#d0d0d4" stroke-width="2"/></svg><span class="t" style="left:52.5px;top:0;line-height:50px;color:#dcdcdc">May 16 11:38:40.683 AM</span><span class="t" style="left:877px;top:0;line-height:50px;color:#a3a3ad">info</span><span class="t" style="left:1164px;top:0;line-height:50px;color:#f2f2f2">ASL Module &quot;com.apple.iokit.power&quot; claims selected messages.</span></div>
<div class="r" style="left:0;top:1400px;width:3517px;height:50px;font-size:30px;line-height:50px"><svg class="r" style="left:10px;top:9px" width="16" height="26" viewBox="0 0 16 26"><polyline points="2,1.5 14,12.5 2,23.5" fill="none" stroke="#d0d0d4" stroke-width="2"/></svg><span class="t" style="left:52.5px;top:0;line-height:50px;color:#dcdcdc">May 16 11:38:40.683 AM</span><span class="t" style="left:877px;top:0;line-height:50px;color:#a3a3ad">info</span><span class="t" style="left:1164px;top:0;line-height:50px;color:#f2f2f2">Those messages may not appear in standard system log files or in the ASL database.</span></div>
<div class="r" style="left:0;top:1450px;width:3517px;height:50px;font-size:30px;line-height:50px"><svg class="r" style="left:10px;top:9px" width="16" height="26" viewBox="0 0 16 26"><polyline points="2,1.5 14,12.5 2,23.5" fill="none" stroke="#d0d0d4" stroke-width="2"/></svg><span class="t" style="left:52.5px;top:0;line-height:50px;color:#dcdcdc">May 16 11:38:40.683 AM</span><span class="t" style="left:877px;top:0;line-height:50px;color:#ffd43b">warn</span><span class="t" style="left:1164px;top:0;line-height:50px;color:#f2f2f2">May 16 00:30:05 Dales-MBP syslogd[579]: Configuration Notice:</span></div>
<div class="r" style="left:0;top:1500px;width:3517px;height:50px;font-size:30px;line-height:50px"><svg class="r" style="left:10px;top:9px" width="16" height="26" viewBox="0 0 16 26"><polyline points="2,1.5 14,12.5 2,23.5" fill="none" stroke="#d0d0d4" stroke-width="2"/></svg><span class="t" style="left:52.5px;top:0;line-height:50px;color:#dcdcdc">May 16 11:38:40.683 AM</span><span class="t" style="left:877px;top:0;line-height:50px;color:#a3a3ad">info</span><span class="t" style="left:1164px;top:0;line-height:50px;color:#f2f2f2">ASL Module &quot;com.apple.contacts.ContactsAutocomplete&quot; claims selected messages.</span></div>
<div class="r" style="left:0;top:1550px;width:3517px;height:50px;font-size:30px;line-height:50px"><svg class="r" style="left:10px;top:9px" width="16" height="26" viewBox="0 0 16 26"><polyline points="2,1.5 14,12.5 2,23.5" fill="none" stroke="#d0d0d4" stroke-width="2"/></svg><span class="t" style="left:52.5px;top:0;line-height:50px;color:#dcdcdc">May 16 11:38:40.683 AM</span><span class="t" style="left:877px;top:0;line-height:50px;color:#a3a3ad">info</span><span class="t" style="left:1164px;top:0;line-height:50px;color:#f2f2f2">Those messages may not appear in standard system log files or in the ASL database.</span></div>
<div class="r" style="left:0;top:1600px;width:3517px;height:50px;font-size:30px;line-height:50px"><svg class="r" style="left:10px;top:9px" width="16" height="26" viewBox="0 0 16 26"><polyline points="2,1.5 14,12.5 2,23.5" fill="none" stroke="#d0d0d4" stroke-width="2"/></svg><span class="t" style="left:52.5px;top:0;line-height:50px;color:#dcdcdc">May 16 11:38:40.683 AM</span><span class="t" style="left:877px;top:0;line-height:50px;color:#ffd43b">warn</span><span class="t" style="left:1164px;top:0;line-height:50px;color:#f2f2f2">May 16 00:30:05 Dales-MBP syslogd[579]: Configuration Notice:</span></div>
<div class="r" style="left:0;top:1650px;width:3517px;height:50px;font-size:30px;line-height:50px"><svg class="r" style="left:10px;top:9px" width="16" height="26" viewBox="0 0 16 26"><polyline points="2,1.5 14,12.5 2,23.5" fill="none" stroke="#d0d0d4" stroke-width="2"/></svg><span class="t" style="left:52.5px;top:0;line-height:50px;color:#dcdcdc">May 16 11:38:40.683 AM</span><span class="t" style="left:877px;top:0;line-height:50px;color:#a3a3ad">info</span><span class="t" style="left:1164px;top:0;line-height:50px;color:#f2f2f2">ASL Module &quot;com.apple.mkb&quot; sharing output destination &quot;/private/var/log/keybagd.log&quot; with ASL Module &quot;com.apple.mkb.internal&quot;.</span></div>
<div class="r" style="left:0;top:1700px;width:3517px;height:50px;font-size:30px;line-height:50px"><svg class="r" style="left:10px;top:9px" width="16" height="26" viewBox="0 0 16 26"><polyline points="2,1.5 14,12.5 2,23.5" fill="none" stroke="#d0d0d4" stroke-width="2"/></svg><span class="t" style="left:52.5px;top:0;line-height:50px;color:#dcdcdc">May 16 11:38:40.683 AM</span><span class="t" style="left:877px;top:0;line-height:50px;color:#ff8787">error</span><span class="t" style="left:1164px;top:0;line-height:50px;color:#f2f2f2">Output parameters from ASL Module &quot;com.apple.mkb.internal&quot; override any specified in ASL Module &quot;com.apple.mkb&quot;.</span></div>
<div class="r" style="left:0;top:1750px;width:3517px;height:50px;font-size:30px;line-height:50px"><svg class="r" style="left:10px;top:9px" width="16" height="26" viewBox="0 0 16 26"><polyline points="2,1.5 14,12.5 2,23.5" fill="none" stroke="#d0d0d4" stroke-width="2"/></svg><span class="t" style="left:52.5px;top:0;line-height:50px;color:#dcdcdc">May 16 11:38:40.683 AM</span><span class="t" style="left:877px;top:0;line-height:50px;color:#ffd43b">warn</span><span class="t" style="left:1164px;top:0;line-height:50px;color:#f2f2f2">May 16 00:30:05 Dales-MBP syslogd[579]: Configuration Notice:</span></div>
<div class="r" style="left:0;top:1800px;width:3517px;height:50px;font-size:30px;line-height:50px"><svg class="r" style="left:10px;top:9px" width="16" height="26" viewBox="0 0 16 26"><polyline points="2,1.5 14,12.5 2,23.5" fill="none" stroke="#d0d0d4" stroke-width="2"/></svg><span class="t" style="left:52.5px;top:0;line-height:50px;color:#dcdcdc">May 16 11:38:40.683 AM</span><span class="t" style="left:877px;top:0;line-height:50px;color:#a3a3ad">info</span><span class="t" style="left:1164px;top:0;line-height:50px;color:#f2f2f2">ASL Module &quot;com.apple.mkb&quot; claims selected messages.</span></div>
<div class="r" style="left:0;top:1850px;width:3517px;height:50px;font-size:30px;line-height:50px"><svg class="r" style="left:10px;top:9px" width="16" height="26" viewBox="0 0 16 26"><polyline points="2,1.5 14,12.5 2,23.5" fill="none" stroke="#d0d0d4" stroke-width="2"/></svg><span class="t" style="left:52.5px;top:0;line-height:50px;color:#dcdcdc">May 16 11:38:40.683 AM</span><span class="t" style="left:877px;top:0;line-height:50px;color:#a3a3ad">info</span><span class="t" style="left:1164px;top:0;line-height:50px;color:#f2f2f2">Those messages may not appear in standard system log files or in the ASL database.</span></div>
<div class="r" style="left:0;top:1900px;width:3517px;height:50px;font-size:30px;line-height:50px"><svg class="r" style="left:10px;top:9px" width="16" height="26" viewBox="0 0 16 26"><polyline points="2,1.5 14,12.5 2,23.5" fill="none" stroke="#d0d0d4" stroke-width="2"/></svg><span class="t" style="left:52.5px;top:0;line-height:50px;color:#dcdcdc">May 16 11:38:40.683 AM</span><span class="t" style="left:877px;top:0;line-height:50px;color:#ffd43b">warn</span><span class="t" style="left:1164px;top:0;line-height:50px;color:#f2f2f2">May 16 00:30:05 Dales-MBP syslogd[579]: Configuration Notice:</span></div>
<div class="r" style="left:0;top:1950px;width:3517px;height:50px;font-size:30px;line-height:50px"><svg class="r" style="left:10px;top:9px" width="16" height="26" viewBox="0 0 16 26"><polyline points="2,1.5 14,12.5 2,23.5" fill="none" stroke="#d0d0d4" stroke-width="2"/></svg><span class="t" style="left:52.5px;top:0;line-height:50px;color:#dcdcdc">May 16 11:38:40.683 AM</span><span class="t" style="left:877px;top:0;line-height:50px;color:#a3a3ad">trace</span><span class="t" style="left:1164px;top:0;line-height:50px;color:#f2f2f2">ASL Module &quot;com.apple.MessageTracer&quot; claims selected messages.</span></div>
</div>
<div class="r" style="left:4770px;top:660px;width:27px;height:2040px;background:#2b2b2b;border-left:1px solid #3a3a3a"></div>
<div class="r" style="left:4778px;top:666px;width:16px;height:398px;background:#6b6b6b;border-radius:8px"></div>
<div class="r" style="left:0px;top:2697px;width:4800px;height:3px;background:#42454a"></div>
<svg class="r" style="left:0px;top:2676px;" width="24" height="24" viewBox="0 0 24 24"><path d="M0 0 V24 H24 A24 24 0 0 1 0 0 Z" fill="#050505"/><path d="M1 0 A23 23 0 0 0 24 23" fill="none" stroke="#42454a" stroke-width="2.5"/></svg>
<svg class="r" style="left:4776px;top:2676px;" width="24" height="24" viewBox="0 0 24 24"><path d="M24 0 V24 H0 A24 24 0 0 0 24 0 Z" fill="#050505"/><path d="M23 0 A23 23 0 0 1 0 23" fill="none" stroke="#55585c" stroke-width="2.5"/></svg>
</div></body></html>
